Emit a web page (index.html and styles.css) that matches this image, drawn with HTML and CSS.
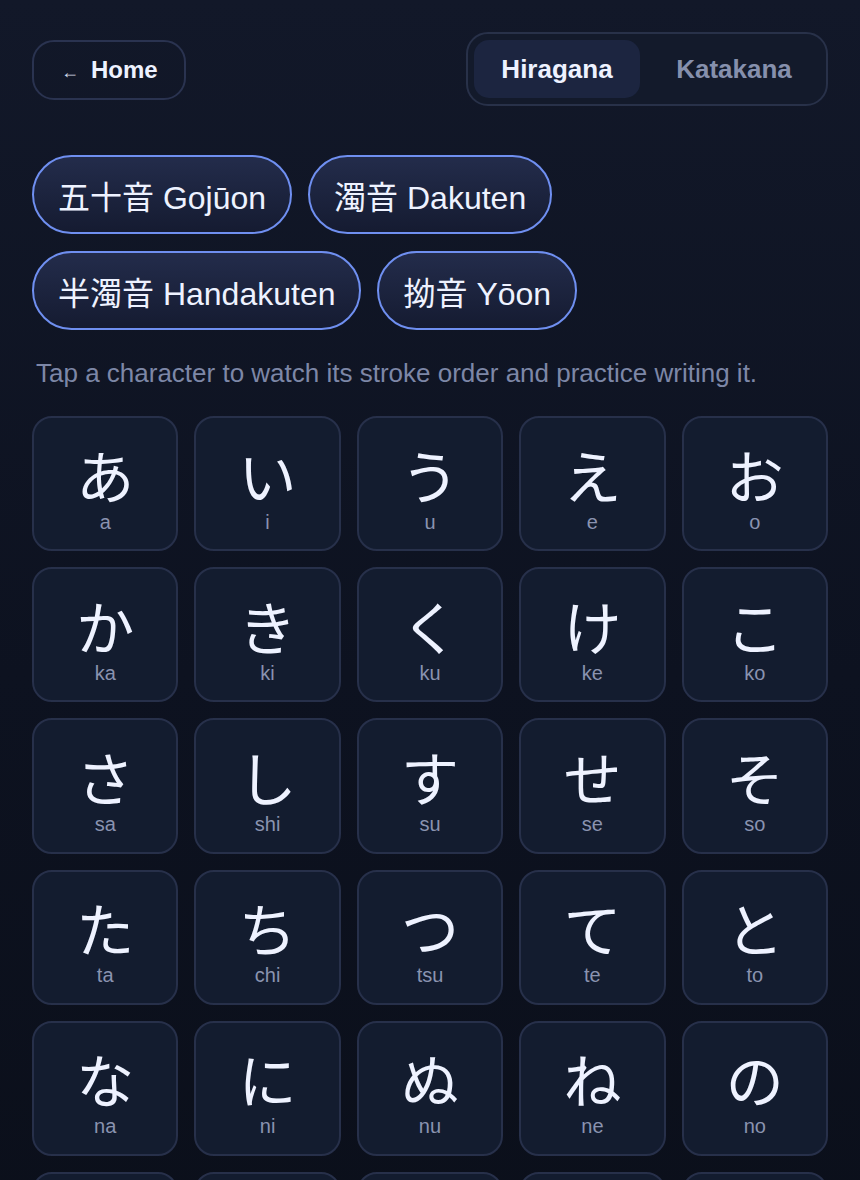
FILE: index.html
```html
<!DOCTYPE html>
<html lang="ja">
<head>
<meta charset="utf-8">
<title>Kana</title>
<link rel="stylesheet" href="styles.css">
</head>
<body>
<div class="page">
  <header class="top">
    <button class="home"><span class="arrow">←</span><span>Home</span></button>
    <div class="seg">
      <button class="seg-btn active">Hiragana</button>
      <button class="seg-btn">Katakana</button>
    </div>
  </header>

  <div class="chips">
    <button class="chip">五十音 Gojūon</button>
    <button class="chip">濁音 Dakuten</button>
    <button class="chip">半濁音 Handakuten</button>
    <button class="chip">拗音 Yōon</button>
  </div>

  <p class="hint">Tap a character to watch its stroke order and practice writing it.</p>

  <div class="grid">
    <div class="tile"><span class="kana">あ</span><span class="rom">a</span></div>
    <div class="tile"><span class="kana">い</span><span class="rom">i</span></div>
    <div class="tile"><span class="kana">う</span><span class="rom">u</span></div>
    <div class="tile"><span class="kana">え</span><span class="rom">e</span></div>
    <div class="tile"><span class="kana">お</span><span class="rom">o</span></div>
    <div class="tile"><span class="kana">か</span><span class="rom">ka</span></div>
    <div class="tile"><span class="kana">き</span><span class="rom">ki</span></div>
    <div class="tile"><span class="kana">く</span><span class="rom">ku</span></div>
    <div class="tile"><span class="kana">け</span><span class="rom">ke</span></div>
    <div class="tile"><span class="kana">こ</span><span class="rom">ko</span></div>
    <div class="tile"><span class="kana">さ</span><span class="rom">sa</span></div>
    <div class="tile"><span class="kana">し</span><span class="rom">shi</span></div>
    <div class="tile"><span class="kana">す</span><span class="rom">su</span></div>
    <div class="tile"><span class="kana">せ</span><span class="rom">se</span></div>
    <div class="tile"><span class="kana">そ</span><span class="rom">so</span></div>
    <div class="tile"><span class="kana">た</span><span class="rom">ta</span></div>
    <div class="tile"><span class="kana">ち</span><span class="rom">chi</span></div>
    <div class="tile"><span class="kana">つ</span><span class="rom">tsu</span></div>
    <div class="tile"><span class="kana">て</span><span class="rom">te</span></div>
    <div class="tile"><span class="kana">と</span><span class="rom">to</span></div>
    <div class="tile"><span class="kana">な</span><span class="rom">na</span></div>
    <div class="tile"><span class="kana">に</span><span class="rom">ni</span></div>
    <div class="tile"><span class="kana">ぬ</span><span class="rom">nu</span></div>
    <div class="tile"><span class="kana">ね</span><span class="rom">ne</span></div>
    <div class="tile"><span class="kana">の</span><span class="rom">no</span></div>
    <div class="tile"><span class="kana">は</span><span class="rom">ha</span></div>
    <div class="tile"><span class="kana">ひ</span><span class="rom">hi</span></div>
    <div class="tile"><span class="kana">ふ</span><span class="rom">fu</span></div>
    <div class="tile"><span class="kana">へ</span><span class="rom">he</span></div>
    <div class="tile"><span class="kana">ほ</span><span class="rom">ho</span></div>
    <div class="tile"><span class="kana">ま</span><span class="rom">ma</span></div>
    <div class="tile"><span class="kana">み</span><span class="rom">mi</span></div>
    <div class="tile"><span class="kana">む</span><span class="rom">mu</span></div>
    <div class="tile"><span class="kana">め</span><span class="rom">me</span></div>
    <div class="tile"><span class="kana">も</span><span class="rom">mo</span></div>
  </div>
</div>
</body>
</html>
```

FILE: styles.css
```css
* { box-sizing: border-box; }

html, body {
  margin: 0;
  padding: 0;
}

body {
  background: linear-gradient(180deg, #121829 0%, #0d1220 45%, #0a0e18 100%);
  min-height: 100vh;
  color: #eef2ff;
  font-family: "Liberation Sans", "Noto Sans CJK JP", Arial, sans-serif;
}

.page {
  padding: 32px 32px 40px;
}

button {
  font-family: inherit;
  cursor: pointer;
}

.top {
  display: flex;
  justify-content: space-between;
  align-items: center;
}

.home {
  display: flex;
  align-items: center;
  gap: 12px;
  height: 60px;
  padding: 0 26px 0 27px;
  margin-top: 2px;
  border: 2px solid #2a3350;
  border-radius: 22px;
  background: transparent;
  color: #eef2ff;
  font-size: 24px;
  font-weight: 700;
}

.arrow {
  font-size: 18px;
  font-weight: 400;
  color: #d6dbe8;
  margin-top: 4px;
}

.seg {
  display: flex;
  padding: 6px;
  border: 2px solid #283149;
  border-radius: 22px;
  background: #131a2b;
}

.seg-btn {
  height: 58px;
  width: 166px;
  border: none;
  border-radius: 15px;
  background: transparent;
  color: #8690ad;
  font-size: 26px;
  font-weight: 700;
}

.seg-btn + .seg-btn {
  width: 180px;
  padding: 0 0 0 8px;
}

.seg-btn.active {
  background: #1c2540;
  color: #eef2ff;
}

.chips {
  display: flex;
  flex-wrap: wrap;
  gap: 17px 16px;
  margin-top: 49px;
  max-width: 560px;
}

.chip {
  height: 79px;
  padding: 0 24px 0 24px;
  border: 2px solid #6f8ff0;
  border-radius: 40px;
  background: linear-gradient(180deg, #232c4b 0%, #151b31 100%);
  color: #eef2ff;
  font-size: 32px;
  font-weight: 400;
  font-family: "Liberation Sans", "Noto Sans CJK JP", sans-serif;
}

.hint {
  margin: 23px 0 23px 4px;
  font-size: 26px;
  line-height: 40px;
  color: #7d87a7;
}

.grid {
  display: grid;
  grid-template-columns: repeat(5, 1fr);
  gap: 16px;
}

.tile {
  height: 135.2px;
  display: flex;
  flex-direction: column;
  align-items: center;
  justify-content: center;
  padding-top: 10px;
  border: 2px solid #27304a;
  border-radius: 20px;
  background: #131c2f;
}

.kana {
  font-family: "Noto Sans CJK JP", sans-serif;
  font-size: 58px;
  line-height: 60px;
  color: #eef2ff;
}

.rom {
  font-size: 20px;
  line-height: 24px;
  color: #8a93b0;
  margin-top: 6px;
}
```
